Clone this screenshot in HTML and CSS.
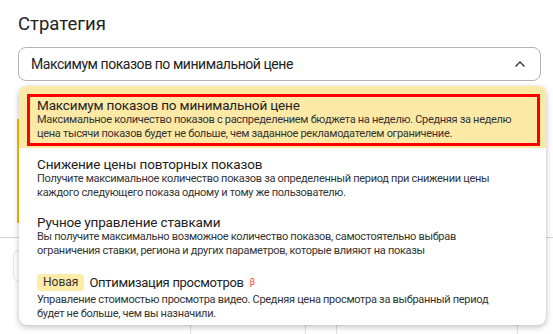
FILE: index.html
```html
<!DOCTYPE html>
<html lang="ru">
<head>
  <meta charset="UTF-8" />
  <title>Стратегия</title>
  <link rel="stylesheet" href="styles.css">
</head>
<body>
  <div class="page">
    <h2 class="title">Стратегия</h2>

    <div class="select">
      <span>Максимум показов по минимальной цене</span>
      <svg class="chevron" width="12" height="8" viewBox="0 0 12 8">
        <polyline points="1.5,6.5 6,2 10.5,6.5" fill="none" stroke="#333" stroke-width="1.4"/>
      </svg>
    </div>

    <!-- content under the open list -->
    <div class="under">
      <div class="notice"></div>
      <div class="divider"></div>
      <div class="under-row">
        <div class="ghost"></div>
      </div>
      <div class="under-buttons">
        <div class="ghost-btn one"></div>
        <div class="ghost-btn two"></div>
      </div>
    </div>

    <!-- open list -->
    <div class="dropdown">
      <div class="option active">
        <div class="mark">
          <div class="opt-title">Максимум показов по минимальной цене</div>
          <div class="opt-desc">Максимальное количество показов с распределением бюджета на неделю. Средняя за неделю<br>цена тысячи показов будет не больше, чем заданное рекламодателем ограничение.</div>
        </div>
      </div>
      <div class="option">
        <div class="opt-title">Снижение цены повторных показов</div>
        <div class="opt-desc">Получите максимальное количество показов за определенный период при снижении цены<br>каждого следующего показа одному и тому же пользователю.</div>
      </div>
      <div class="option">
        <div class="opt-title">Ручное управление ставками</div>
        <div class="opt-desc">Вы получите максимально возможное количество показов, самостоятельно выбрав<br>ограничения ставки, региона и других параметров, которые влияют на показы</div>
      </div>
      <div class="option">
        <div class="opt-title with-badge">
          <span class="badge">Новая</span>
          <span>Оптимизация просмотров</span><sup class="beta">β</sup>
        </div>
        <div class="opt-desc">Управление стоимостью просмотра видео. Средняя цена просмотра за выбранный период<br>будет не больше, чем вы назначили.</div>
      </div>
    </div>
  </div>
</body>
</html>
```

FILE: styles.css
```css
body {
  margin: 0;
  font-family: Roboto, "Liberation Sans", sans-serif;
  background: #fff;
  color: #222;
  overflow: hidden;
}
.page {
  position: relative;
  width: 553px;
  height: 334px;
  padding: 11px 12px 0 18px;
  box-sizing: border-box;
}
.title {
  margin: 0 0 10px;
  font-size: 18.5px;
  font-weight: 400;
  line-height: 26px;
  color: #222;
}
.select {
  display: flex;
  align-items: center;
  justify-content: space-between;
  width: 523px;
  height: 34px;
  box-sizing: border-box;
  padding: 0 14px 0 12px;
  border: 1px solid #b3b3b3;
  border-radius: 8px;
  font-size: 14px;
  letter-spacing: -0.45px;
}
.chevron {
  display: block;
}

/* what lies below the list */
.under {
  padding-top: 38px;
}
.notice {
  width: 2px;
  height: 104px;
  background: #f5c400;
  margin-left: -1px;
}
.divider {
  margin: 14px -18px 0;
  height: 1px;
  background: #d4d4e0;
}
.under-row {
  padding-top: 12px;
}
.ghost {
  width: 40px;
  height: 30px;
  margin-left: -5px;
  border: 1px solid #e6e6e6;
  border-radius: 6px;
}
.under-buttons {
  display: flex;
  gap: 30px;
  padding: 34px 0 0 172px;
}
.ghost-btn {
  height: 20px;
  border: 1px solid #ddd;
  border-radius: 6px;
}
.ghost-btn.one { width: 114px; }
.ghost-btn.two { width: 180px; }

/* open list */
.dropdown {
  position: absolute;
  top: 86px;
  left: 19px;
  width: 527px;
  height: 239px;
  padding-top: 2px;
  box-sizing: border-box;
  background: #fff;
  border-radius: 8px;
  box-shadow: 0 2px 6px rgba(0, 0, 0, 0.25), 0 0 1px rgba(0, 0, 0, 0.15);
  overflow: hidden;
}
.option {
  padding: 8px 10px 6px 18px;
  white-space: nowrap;
}
.option.active {
  margin-top: -2px;
  padding: 8px 6px 2px 8px;
  background: #fde9a6;
}
.mark {
  border: 3px solid #f00;
  padding: 0 7px 2px;
}
.opt-title {
  font-size: 13.5px;
  letter-spacing: -0.15px;
  line-height: 16px;
  color: #222;
}
.opt-desc {
  font-size: 11px;
  letter-spacing: -0.3px;
  line-height: 14px;
  color: #333;
}
.with-badge {
  display: flex;
  align-items: center;
  gap: 5px;
  margin: 2px 0 2px;
  font-size: 13px;
  letter-spacing: -0.3px;
}
.badge {
  background: #fdeba8;
  border-radius: 4px;
  padding: 1px 6px;
  font-size: 12px;
  letter-spacing: 0;
  line-height: 15px;
  color: #333;
}
.beta {
  color: #f33;
  font-size: 9px;
  align-self: flex-start;
  margin-left: 1px;
}
```
